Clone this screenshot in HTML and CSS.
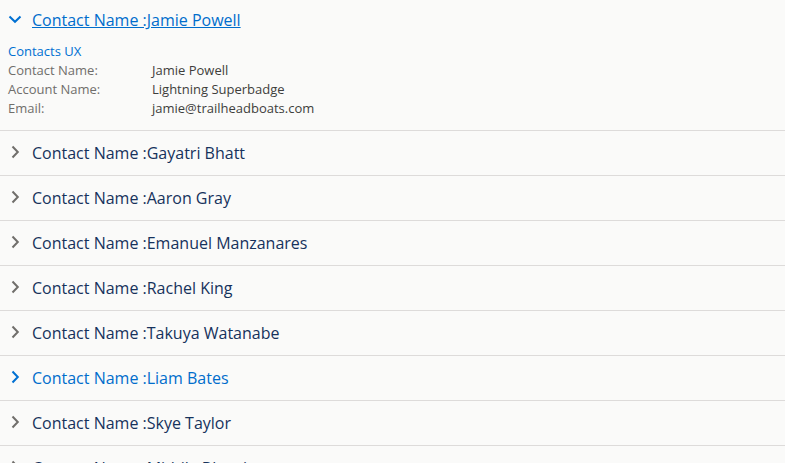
FILE: index.html
```html
<!DOCTYPE html>
<html lang="en">
<head>
    <meta charset="UTF-8">
    <title>Contacts</title>
    <link rel="stylesheet" href="styles.css">
</head>
<body>
<ul class="accordion">
    <li class="section open">
        <div class="summary">
            <svg class="chev" viewBox="0 0 14 14"><path d="M1.5 4.5 L7 9.8 L12.5 4.5"/></svg>
            <span class="title">Contact Name :Jamie Powell</span>
        </div>
        <div class="content">
            <div class="card-title">Contacts UX</div>
            <div class="field"><span class="label">Contact Name:</span><span class="value">Jamie Powell</span></div>
            <div class="field"><span class="label">Account Name:</span><span class="value">Lightning Superbadge</span></div>
            <div class="field"><span class="label">Email:</span><span class="value">jamie@trailheadboats.com</span></div>
        </div>
    </li>
    <li class="section">
        <div class="summary">
            <svg class="chev" viewBox="0 0 14 14"><path d="M4.5 1.5 L9.8 7 L4.5 12.5"/></svg>
            <span class="title">Contact Name :Gayatri Bhatt</span>
        </div>
    </li>
    <li class="section">
        <div class="summary">
            <svg class="chev" viewBox="0 0 14 14"><path d="M4.5 1.5 L9.8 7 L4.5 12.5"/></svg>
            <span class="title">Contact Name :Aaron Gray</span>
        </div>
    </li>
    <li class="section">
        <div class="summary">
            <svg class="chev" viewBox="0 0 14 14"><path d="M4.5 1.5 L9.8 7 L4.5 12.5"/></svg>
            <span class="title">Contact Name :Emanuel Manzanares</span>
        </div>
    </li>
    <li class="section">
        <div class="summary">
            <svg class="chev" viewBox="0 0 14 14"><path d="M4.5 1.5 L9.8 7 L4.5 12.5"/></svg>
            <span class="title">Contact Name :Rachel King</span>
        </div>
    </li>
    <li class="section">
        <div class="summary">
            <svg class="chev" viewBox="0 0 14 14"><path d="M4.5 1.5 L9.8 7 L4.5 12.5"/></svg>
            <span class="title">Contact Name :Takuya Watanabe</span>
        </div>
    </li>
    <li class="section hover">
        <div class="summary">
            <svg class="chev" viewBox="0 0 14 14"><path d="M4.5 1.5 L9.8 7 L4.5 12.5"/></svg>
            <span class="title">Contact Name :Liam Bates</span>
        </div>
    </li>
    <li class="section">
        <div class="summary">
            <svg class="chev" viewBox="0 0 14 14"><path d="M4.5 1.5 L9.8 7 L4.5 12.5"/></svg>
            <span class="title">Contact Name :Skye Taylor</span>
        </div>
    </li>
    <li class="section">
        <div class="summary">
            <svg class="chev" viewBox="0 0 14 14"><path d="M4.5 1.5 L9.8 7 L4.5 12.5"/></svg>
            <span class="title">Contact Name :Mithila Bharti</span>
        </div>
    </li>
</ul>
</body>
</html>
```

FILE: styles.css
```css
*{
    margin: 0px;
    padding: 0px;
    box-sizing: border-box;
}
html,body{
    background: #fafaf9;
    height: 100%;
    overflow: hidden;
}
body{
    font-family: "Open Sans", "Liberation Sans", sans-serif;
    color: #16325c;
}
li{
    list-style: none;
}
.section{
    border-bottom: 1px solid #dddbda;
}
.summary{
    height: 44px;
    display: flex;
    align-items: center;
    padding-left: 8px;
    font-size: 16px;
    line-height: 20px;
}
.chev{
    width: 14px;
    height: 14px;
    margin-right: 10px;
    margin-top: -2px;
    fill: none;
    stroke: #706e6b;
    stroke-width: 2;
}
.open .summary{
    height: 40px;
}
.open .chev,.hover .chev{
    stroke: #0070d2;
}
.open .title{
    color: #006dcc;
    text-decoration: underline;
}
.hover .title{
    color: #006dcc;
}
.content{
    padding: 2px 8px 12px;
    font-size: 13px;
    line-height: 19px;
}
.card-title{
    color: #0070d2;
}
.field{
    display: flex;
}
.label{
    width: 144px;
    color: #706e6b;
}
.value{
    color: #3e3e3c;
}
```
